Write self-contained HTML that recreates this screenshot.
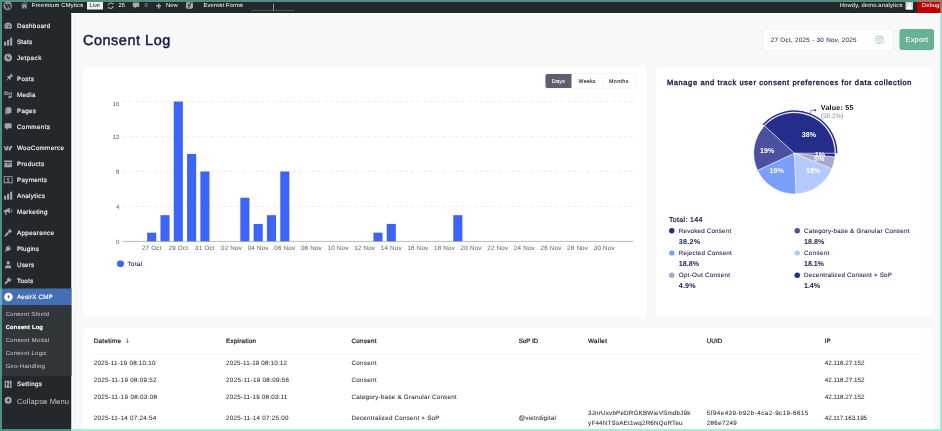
<!DOCTYPE html>
<html lang="en"><head><meta charset="utf-8"><title>Consent Log</title><style>
html,body{margin:0;padding:0}
body{width:942px;height:431px;overflow:hidden;background:#f7f8fa;font-family:"Liberation Sans", Arial, sans-serif;position:relative}
#root{position:absolute;left:0;top:0;width:1884px;height:862px;overflow:hidden;transform:scale(0.5) translateZ(0);transform-origin:0 0;}
.abs,.ic,.card,.t{position:absolute}
.card{background:#fff;border-radius:9px;box-shadow:0 0 0 0.8px #f1f2f5}
.t{white-space:nowrap;line-height:1;text-rendering:geometricPrecision;-webkit-text-stroke:0.32px currentColor}
svg{overflow:visible}
#frame{position:absolute;left:0;top:0;width:1884px;height:862px;box-sizing:border-box;border:4px solid rgba(112,216,192,0.575);pointer-events:none}
</style></head><body><div id="root">
<div class="abs" style="left:0;top:0;width:1884px;height:25.8px;background:#23282c"></div>
<div class="abs" style="left:0;top:0;width:143px;height:862px;background:#23282c"></div>
<div class="abs" style="left:143px;top:25.8px;width:2.8px;height:838px;background:#fdfdfe"></div>
<div class="abs" style="left:143px;top:25.8px;width:1742px;height:2.2px;background:#fdfdfe"></div>
<div class="abs" style="left:0;top:609.8px;width:143px;height:142.4px;background:#31363b"></div>
<div class="abs" style="left:0;top:576.8px;width:143px;height:33px;background:#456fb3"></div>
<svg class="ic" style="left:6.4px;top:1.8px;width:18.8px;height:18.8px" viewBox="0 0 20 20"><circle cx="10" cy="10" r="9.600" fill="#82878b"/><path d="M2.800 6.500h4l2.200 6.500 1.100-3.400-1.100-3.100h4l2.200 6.500 1.300-4.200c.3-1 .2-1.700-.3-2.300h2.300l-3.200 10h-1.600l-2.100-6.200-2.100 6.200h-1.600z" fill="#23282c"/></svg>
<svg class="ic" style="left:40.6px;top:2.8px;width:15.2px;height:15.6px" viewBox="0 0 20 20" fill="#a7aaad"><path d="M10 1.500l9 8.300-1.200 1.300L10 4 2.200 11.100 1 9.800zM10 6l6 5.500V18h-4.200v-4.500H8.200V18H4v-6.500zM14 2.500h2.500v3.300L14 3.600z"/></svg>
<div class="abs" style="left:174.2px;top:3.8px;width:31.4px;height:15.4px;background:#e9f6ec"></div>
<svg class="ic" style="left:213.2px;top:3px;width:16.8px;height:16.8px" viewBox="0 0 20 20" fill="none" stroke="#a7aaad" stroke-width="2.600"><path d="M4 9a6.200 6.200 0 0 1 10.600-3.500M16 11a6.200 6.200 0 0 1-10.600 3.500"/><path d="M12.500 6.800h4.200V2.600zM7.500 13.200H3.300v4.200z" fill="#a7aaad" stroke="none"/></svg>
<svg class="ic" style="left:264px;top:3.4px;width:16px;height:16.4px" viewBox="0 0 20 20" fill="#a7aaad"><path d="M3.500 2.500h13a1.500 1.500 0 0 1 1.500 1.500v8a1.500 1.500 0 0 1-1.500 1.500H11L7 18v-4.500H3.500A1.500 1.500 0 0 1 2 12V4a1.500 1.500 0 0 1 1.500-1.500z"/></svg>
<div class="abs" style="left:312px;top:10.4px;width:10.4px;height:3px;background:#a7aaad"></div><div class="abs" style="left:315.7px;top:6.7px;width:3px;height:10.4px;background:#a7aaad"></div>
<svg class="ic" style="left:370.8px;top:2.4px;width:16.6px;height:18px" viewBox="0 0 20 20"><rect x="1" y="2" width="17" height="16" rx="3.500" fill="#a7aaad"/><path d="M6 6l3 6.500L13.500 1.500" fill="none" stroke="#23282c" stroke-width="2.400"/><path d="M9.300 12.500c-.5 2-1.500 3-3.300 3.200" fill="none" stroke="#23282c" stroke-width="2.200"/></svg>
<div class="abs" style="left:502px;top:19.8px;width:86px;height:1.6px;background:#7d8287"></div><div class="abs" style="left:546.2px;top:6.8px;width:1.6px;height:14px;background:#8b9095"></div>
<div class="abs" style="left:1811px;top:4.4px;width:14.8px;height:14.4px;background:#d5d5d5;overflow:hidden"><div style="position:absolute;left:4.6px;top:2.2px;width:5.6px;height:5.8px;border-radius:50%;background:#fff"></div><div style="position:absolute;left:2px;top:8.6px;width:10.8px;height:8px;border-radius:4px 4px 0 0;background:#fff"></div></div>
<div class="abs" style="left:1834.4px;top:0;width:49.6px;height:25.8px;background:#c00000"></div>
<svg class="ic" style="left:7.1px;top:42.3px;width:18.6px;height:18.6px" viewBox="0 0 20 20" fill="#a2a6a9"><path d="M10 3.2a8.3 8.3 0 0 0-8.3 8.3c0 1.9.6 3.6 1.7 5h13.2a8.2 8.2 0 0 0 1.7-5A8.3 8.3 0 0 0 10 3.2z"/><g fill="#23282c"><circle cx="5" cy="11.6" r="1.1"/><circle cx="6.6" cy="8" r="1.1"/><circle cx="10" cy="6.5" r="1.1"/><circle cx="15" cy="11.6" r="1.1"/><path d="M9 13.5l4.3-6 .9.6-3.3 6.6z"/></g></svg>
<svg class="ic" style="left:7.1px;top:74.3px;width:18.6px;height:18.6px" viewBox="0 0 20 20" fill="#a2a6a9"><rect x="1.200" y="10" width="4.600" height="8.600"/><rect x="7.700" y="6" width="4.600" height="12.600"/><rect x="14.200" y="1.600" width="4.600" height="17"/></svg>
<svg class="ic" style="left:7.1px;top:106.3px;width:18.6px;height:18.6px" viewBox="0 0 20 20" fill="#a2a6a9"><circle cx="10" cy="10" r="8.2"/><path d="M9.4 3.8v7.4H5.6zM10.6 16.2V8.8h3.8z" fill="#23282c"/></svg>
<svg class="ic" style="left:7.1px;top:148.1px;width:18.6px;height:18.6px" viewBox="0 0 20 20" fill="#a2a6a9"><g transform="translate(11.800 8.200) rotate(45)"><path d="M-3.800-9h7.600v1.900h-1.700v4l2.800 3v1.500h-9.800v-1.500l2.800-3v-4h-1.700z"/><path d="M-1 1.200h2l-1 11.500z"/></g></svg>
<svg class="ic" style="left:7.1px;top:180.1px;width:18.6px;height:18.6px" viewBox="0 0 20 20" fill="#a2a6a9"><path d="M2 3h5l1 1.4h3V11H2zM6.5 5.4a2.2 2.2 0 1 0 0 4.4 2.2 2.2 0 0 0 0-4.4z" fill-rule="evenodd"/><path d="M13 6.2l5-1.2v9.6a2 2 0 1 1-1.4-1.9V8l-2.4.6v7a2 2 0 1 1-1.4-1.9z"/></svg>
<svg class="ic" style="left:7.1px;top:212.1px;width:18.6px;height:18.6px" viewBox="0 0 20 20" fill="#a2a6a9"><path d="M6 2.5h8l3 3V15H6z"/><path d="M3.5 5h1.6v11h8.4v1.6h-10z"/></svg>
<svg class="ic" style="left:7.1px;top:244.1px;width:18.6px;height:18.6px" viewBox="0 0 20 20" fill="#a2a6a9"><path d="M3.5 2.5h13a1 1 0 0 1 1 1v9a1 1 0 0 1-1 1H10L6 17.8v-4.3H3.500a1 1 0 0 1-1-1v-9a1 1 0 0 1 1-1z"/></svg>
<svg class="ic" style="left:7.1px;top:286.5px;width:18.6px;height:18.6px" viewBox="0 0 20 20" fill="#a2a6a9"><path d="M0.300 5.200h3.500l.7 6 3-6h3l.7 6 3-6h5.500l-5 9.800h-3.400l-.8-5.500-2.700 5.500H3.400z"/></svg>
<svg class="ic" style="left:7.1px;top:318.1px;width:18.6px;height:18.6px" viewBox="0 0 20 20" fill="#a2a6a9"><path d="M1 3h18v3.400H1zM2 8h16v9.500H2z"/><rect x="6.500" y="10" width="7" height="2" fill="#23282c"/></svg>
<svg class="ic" style="left:7.1px;top:350.3px;width:18.6px;height:18.6px" viewBox="0 0 20 20" fill="#a2a6a9"><path d="M0.500 2.500h19v15h-19zM2.300 4.300v11.400h15.400V4.300z" fill-rule="evenodd"/><path d="M9.300 5.500h1.400v1.100c1.100.1 1.900.7 2.200 1.600l-1.300.5c-.2-.6-.7-.9-1.500-.9s-1.300.3-1.300.9.500.8 1.600 1c1.600.3 2.700.9 2.700 2.300 0 1.200-.9 2-2.400 2.200v1.200H9.300v-1.200c-1.300-.2-2.200-.9-2.500-2l1.300-.4c.2.800.9 1.200 1.900 1.200s1.500-.4 1.500-1-.6-.9-1.800-1.100c-1.500-.3-2.500-.9-2.500-2.200 0-1.100.9-1.900 2.100-2.100z"/></svg>
<svg class="ic" style="left:7.1px;top:381.9px;width:18.6px;height:18.6px" viewBox="0 0 20 20" fill="#a2a6a9"><rect x="1.200" y="10" width="4.600" height="8.600"/><rect x="7.700" y="6" width="4.600" height="12.600"/><rect x="14.200" y="1.600" width="4.600" height="17"/></svg>
<svg class="ic" style="left:7.1px;top:413.7px;width:18.6px;height:18.6px" viewBox="0 0 20 20" fill="#a2a6a9"><path d="M12.800 1.500l2 11.800-8-2.900-1 .3 1.500 6-2.600.8-1.700-6-1.700.5L0.200 7.800l2-.7z"/><path d="M15 3.800a4.400 4.400 0 0 1 4 3.500 4.400 4.400 0 0 1-2.400 4.600l-.5-1.500a2.900 2.900 0 0 0 1.400-2.800 2.900 2.900 0 0 0-2.300-2.300z"/></svg>
<svg class="ic" style="left:7.1px;top:456.3px;width:18.6px;height:18.6px" viewBox="0 0 20 20" fill="#a2a6a9"><path d="M12.500 1.500l6 6-2 2-1.300-.3-2.400 2.400-3.900-3.900 2.400-2.400-.3-1.300zM8.200 8.600l3.500 3.500-6.200 5.800c-1 .9-2.300 1.100-3 .4s-.5-2 .4-3z"/></svg>
<svg class="ic" style="left:7.1px;top:487.9px;width:18.6px;height:18.6px" viewBox="0 0 20 20" fill="#a2a6a9"><path d="M13.100 3.400l1.200 1.200-2.800 2.800 1.800 1.800 2.800-2.800 1.200 1.200-2.800 2.800.9.900-1.600 1.600c-1.700 1.700-4.200 2-6.200.9L4.700 16.700H2.500v-1.200l3.200-3.200c-1.100-2-.8-4.500.9-6.200L8.200 4.500l.9.900z"/></svg>
<svg class="ic" style="left:7.1px;top:519.7px;width:18.6px;height:18.6px" viewBox="0 0 20 20" fill="#a2a6a9"><circle cx="10" cy="6" r="3.700"/><path d="M3 17.500c0-4 2.500-6.300 4.800-6.800l2.200 2.200 2.200-2.200c2.300.5 4.800 2.800 4.800 6.800z"/></svg>
<svg class="ic" style="left:7.1px;top:551.9px;width:18.6px;height:18.6px" viewBox="0 0 20 20" fill="#a2a6a9"><path d="M16.700 6.400l-2.500.6-1.300-1.300.6-2.500c-1.600-.5-3.300-.1-4.500 1.100-1.300 1.300-1.600 3.200-1 4.800L2.600 14.500c-.8.800-.8 2.100 0 2.900s2.100.8 2.900 0L11 11.900c1.600.7 3.500.3 4.800-1 1.200-1.200 1.500-3 .9-4.500z"/></svg>
<svg class="ic" style="left:7.8px;top:584.6px;width:17.8px;height:17.8px" viewBox="0 0 20 20"><circle cx="10" cy="10" r="9.6" fill="#fff"/><path d="M10.800 4l-3 6.200h2.200l-1 5.800 3.500-7.300h-2.300z" fill="#23282c"/></svg>
<svg class="ic" style="left:7.1px;top:758.5px;width:18.6px;height:18.6px" viewBox="0 0 20 20" fill="#a2a6a9"><path d="M2.500 2.500h15v15h-15zM6 4.500v3.600H4.500v2.600H6v4.800h1.600v-4.800H9V8.100H7.600V4.500zm6.400 0v6.600H11v2.600h1.400v1.800H14v-1.800h1.500v-2.600H14V4.500z" fill-rule="evenodd"/></svg>
<svg class="ic" style="left:8.4px;top:791.6px;width:16.8px;height:16.8px" viewBox="0 0 20 20" fill="#a2a6a9"><path d="M10 1.500a8.500 8.500 0 1 0 0 17 8.500 8.500 0 0 0 0-17zM12.500 5.500v9l-6-4.500z" fill-rule="evenodd"/></svg>
<div class="abs" style="left:1527.4px;top:58.6px;width:257.2px;height:42px;background:#fff;border-radius:5px;box-shadow:0 0 3px rgba(0,0,0,0.06)"></div>
<svg class="ic" style="left:1751.2px;top:70.2px;width:16px;height:18px" viewBox="0 0 16 18" fill="none" stroke="#7fc18c" stroke-width="1.250"><rect x="1.200" y="2.800" width="13.600" height="14" rx="3"/><path d="M1.200 7.400h13.600M4.800 0.800v3.400M11.200 0.800v3.400"/><rect x="5.800" y="10" width="4.400" height="4" rx="0.800" stroke-width="1"/></svg>
<div class="abs" style="left:1799.2px;top:58px;width:68.4px;height:42px;background:#68b193;border-radius:5.4px"></div>
<div class="card" style="left:164.6px;top:133.4px;width:1129.4px;height:500.6px"></div>
<div class="card" style="left:1311.2px;top:133.4px;width:555.4px;height:500.6px"></div>
<div class="card" style="left:164.6px;top:655.8px;width:1702px;height:220px"></div>
<div class="abs" style="left:1090.6px;top:148.2px;width:180.2px;height:27.8px;background:#fff;border-radius:3.6px;box-shadow:0 0 0 1px #ebebef"></div>
<div class="abs" style="left:1204.4px;top:148.2px;width:1px;height:27.8px;background:#ececf0"></div>
<div class="abs" style="left:1090.6px;top:148.2px;width:52.8px;height:27.8px;background:#5f5e70;border-radius:3.6px 0 0 3.6px"></div>
<svg class="abs" style="left:0;top:0;width:1884px;height:862px" viewBox="0 0 942 431"><line x1="122.3" x2="633.3" y1="206.44" y2="206.44" stroke="#dcdcdc" stroke-width="0.55" stroke-dasharray="3.13 3.13" stroke-dashoffset="-0.9"/><line x1="122.3" x2="633.3" y1="171.48" y2="171.48" stroke="#dcdcdc" stroke-width="0.55" stroke-dasharray="3.13 3.13" stroke-dashoffset="-0.9"/><line x1="122.3" x2="633.3" y1="136.52" y2="136.52" stroke="#dcdcdc" stroke-width="0.55" stroke-dasharray="3.13 3.13" stroke-dashoffset="-0.9"/><line x1="122.3" x2="633.3" y1="101.56" y2="101.56" stroke="#dcdcdc" stroke-width="0.55" stroke-dasharray="3.13 3.13" stroke-dashoffset="-0.9"/><rect x="147.15" y="232.66" width="9.1" height="8.74" fill="#3d64f9"/><rect x="160.46" y="215.18" width="9.1" height="26.22" fill="#3d64f9"/><rect x="173.77" y="101.56" width="9.1" height="139.84" fill="#3d64f9"/><rect x="187.08" y="154.00" width="9.1" height="87.40" fill="#3d64f9"/><rect x="200.39" y="171.48" width="9.1" height="69.92" fill="#3d64f9"/><rect x="240.32" y="197.70" width="9.1" height="43.70" fill="#3d64f9"/><rect x="253.63" y="223.92" width="9.1" height="17.48" fill="#3d64f9"/><rect x="266.94" y="215.18" width="9.1" height="26.22" fill="#3d64f9"/><rect x="280.25" y="171.48" width="9.1" height="69.92" fill="#3d64f9"/><rect x="373.42" y="232.66" width="9.1" height="8.74" fill="#3d64f9"/><rect x="386.73" y="223.92" width="9.1" height="17.48" fill="#3d64f9"/><rect x="453.28" y="215.18" width="9.1" height="26.22" fill="#3d64f9"/><line x1="122.3" x2="633.3" y1="241.4" y2="241.4" stroke="#8b8b8b" stroke-width="0.6"/></svg>
<div class="abs" style="left:234px;top:520.6px;width:13.6px;height:13.6px;border-radius:50%;background:#3d64f9"></div>
<svg class="abs" style="left:0;top:0;width:1884px;height:862px" viewBox="0 0 942 431"><path d="M794.4 153.3L835.00 153.30A40.6 40.6 0 0 0 764.47 125.87Z" fill="#252e8a" stroke="#fff" stroke-width="0.45" stroke-linejoin="round"/><path d="M794.4 153.3L764.47 125.87A40.6 40.6 0 0 0 757.60 170.46Z" fill="#4b50a0" stroke="#fff" stroke-width="0.45" stroke-linejoin="round"/><path d="M794.4 153.3L757.60 170.46A40.6 40.6 0 0 0 796.17 193.86Z" fill="#7a9ffa" stroke="#fff" stroke-width="0.45" stroke-linejoin="round"/><path d="M794.4 153.3L796.17 193.86A40.6 40.6 0 0 0 831.91 168.84Z" fill="#b4c9fe" stroke="#fff" stroke-width="0.45" stroke-linejoin="round"/><path d="M794.4 153.3L831.91 168.84A40.6 40.6 0 0 0 834.85 156.84Z" fill="#a7a9d0" stroke="#fff" stroke-width="0.45" stroke-linejoin="round"/><path d="M794.4 153.3L834.85 156.84A40.6 40.6 0 0 0 835.00 153.30Z" fill="#252e8a" stroke="#fff" stroke-width="0.45" stroke-linejoin="round"/><path d="M837.45 153.30A43.05 43.05 0 0 0 762.66 124.22L763.80 125.26A41.5 41.5 0 0 1 835.90 153.30Z" fill="#252e8a"/><path d="M809.98 113.22L811.14 110.24L815.0 110.24" fill="none" stroke="#252e8a" stroke-width="0.55"/><circle cx="815.2" cy="110.24" r="0.95" fill="#252e8a"/></svg>
<div class="abs" style="left:1338.2px;top:456.4px;width:10.8px;height:10.8px;border-radius:50%;background:#252e8a"></div>
<div class="abs" style="left:1589.2px;top:456.4px;width:10.8px;height:10.8px;border-radius:50%;background:#4b50a0"></div>
<div class="abs" style="left:1338.2px;top:500.6px;width:10.8px;height:10.8px;border-radius:50%;background:#7a9ffa"></div>
<div class="abs" style="left:1589.2px;top:500.6px;width:10.8px;height:10.8px;border-radius:50%;background:#b4c9fe"></div>
<div class="abs" style="left:1338.2px;top:544.8px;width:10.8px;height:10.8px;border-radius:50%;background:#a7a9d0"></div>
<div class="abs" style="left:1589.2px;top:544.8px;width:10.8px;height:10.8px;border-radius:50%;background:#252e8a"></div>
<svg class="abs" style="left:250.6px;top:676px;width:7.2px;height:10.8px" viewBox="0 0 8 12" fill="none" stroke="#66667c" stroke-width="1.900"><path d="M4 1v9.500M1 7.500l3 3 3-3"/></svg>
<div class="abs" style="left:187.4px;top:708.6px;width:1656.6px;height:1.2px;background:#ededf0"></div>
<div class="t" id="t0" style="top:3.7px;font-size:11.62px;color:#f0f0f1;left:63.4px;letter-spacing:0.402px;-webkit-text-stroke:0.08px currentColor;">Freemium CMytics</div>
<div class="t" id="t1" style="top:3.7px;font-size:11.62px;color:#1d2327;left:179.2px;letter-spacing:0.032px;-webkit-text-stroke:0.08px currentColor;">Live</div>
<div class="t" id="t2" style="top:3.7px;font-size:11.62px;color:#f0f0f1;left:237px;letter-spacing:0.284px;-webkit-text-stroke:0.08px currentColor;">25</div>
<div class="t" id="t3" style="top:3.7px;font-size:11.62px;color:#a7aaad;left:289.2px;letter-spacing:0.128px;-webkit-text-stroke:0.08px currentColor;">0</div>
<div class="t" id="t4" style="top:3.7px;font-size:11.62px;color:#f0f0f1;left:332.2px;letter-spacing:0.086px;-webkit-text-stroke:0.08px currentColor;">New</div>
<div class="t" id="t5" style="top:3.7px;font-size:11.62px;color:#f0f0f1;left:407.2px;letter-spacing:0.242px;-webkit-text-stroke:0.08px currentColor;">Everest Forms</div>
<div class="t" id="t6" style="top:3.7px;font-size:11.62px;color:#f0f0f1;left:1679.4px;letter-spacing:0.334px;-webkit-text-stroke:0.08px currentColor;">Howdy, demo.analytics</div>
<div class="t" id="t7" style="top:3.7px;font-size:11.62px;color:#fff;left:1843.6px;letter-spacing:0.296px;-webkit-text-stroke:0.08px currentColor;">Debug</div>
<div class="t" id="t8" style="top:45.74px;font-size:12.52px;color:#f0f0f1;left:33.8px;letter-spacing:0.67px;">Dashboard</div>
<div class="t" id="t9" style="top:77.74px;font-size:12.52px;color:#f0f0f1;left:33.8px;letter-spacing:0.516px;">Stats</div>
<div class="t" id="t10" style="top:109.74px;font-size:12.52px;color:#f0f0f1;left:33.8px;letter-spacing:0.944px;">Jetpack</div>
<div class="t" id="t11" style="top:151.74px;font-size:12.52px;color:#f0f0f1;left:33.8px;letter-spacing:0.724px;">Posts</div>
<div class="t" id="t12" style="top:183.74px;font-size:12.52px;color:#f0f0f1;left:33.8px;letter-spacing:0.776px;">Media</div>
<div class="t" id="t13" style="top:215.74px;font-size:12.52px;color:#f0f0f1;left:33.8px;letter-spacing:0.626px;">Pages</div>
<div class="t" id="t14" style="top:247.74px;font-size:12.52px;color:#f0f0f1;left:33.8px;letter-spacing:0.812px;">Comments</div>
<div class="t" id="t15" style="top:289.74px;font-size:12.52px;color:#f0f0f1;left:33.8px;letter-spacing:0.728px;">WooCommerce</div>
<div class="t" id="t16" style="top:321.74px;font-size:12.52px;color:#f0f0f1;left:33.8px;letter-spacing:0.714px;">Products</div>
<div class="t" id="t17" style="top:353.74px;font-size:12.52px;color:#f0f0f1;left:33.8px;letter-spacing:0.648px;">Payments</div>
<div class="t" id="t18" style="top:385.74px;font-size:12.52px;color:#f0f0f1;left:33.8px;letter-spacing:0.714px;">Analytics</div>
<div class="t" id="t19" style="top:417.74px;font-size:12.52px;color:#f0f0f1;left:33.8px;letter-spacing:0.754px;">Marketing</div>
<div class="t" id="t20" style="top:459.74px;font-size:12.52px;color:#f0f0f1;left:33.8px;letter-spacing:0.744px;">Appearance</div>
<div class="t" id="t21" style="top:491.74px;font-size:12.52px;color:#f0f0f1;left:33.8px;letter-spacing:0.49px;">Plugins</div>
<div class="t" id="t22" style="top:523.74px;font-size:12.52px;color:#f0f0f1;left:33.8px;letter-spacing:0.428px;">Users</div>
<div class="t" id="t23" style="top:555.74px;font-size:12.52px;color:#f0f0f1;left:33.8px;letter-spacing:0.796px;">Tools</div>
<div class="t" id="t24" style="top:587.74px;font-size:12.52px;color:#fff;left:33.8px;letter-spacing:0.404px;">AesirX CMP</div>
<div class="t" id="t25" style="top:621.7px;font-size:11.62px;color:#c3c4c7;left:11.5px;letter-spacing:0.596px;-webkit-text-stroke:0.1px currentColor;">Consent Shield</div>
<div class="t" id="t26" style="top:647.7px;font-size:11.62px;color:#fff;font-weight:700;left:11.5px;letter-spacing:0.336px;">Consent Log</div>
<div class="t" id="t27" style="top:673.7px;font-size:11.62px;color:#c3c4c7;left:11.5px;letter-spacing:0.702px;-webkit-text-stroke:0.1px currentColor;">Consent Modal</div>
<div class="t" id="t28" style="top:699.7px;font-size:11.62px;color:#c3c4c7;left:11.5px;letter-spacing:0.64px;-webkit-text-stroke:0.1px currentColor;">Consent Logic</div>
<div class="t" id="t29" style="top:725.7px;font-size:11.62px;color:#c3c4c7;left:11.5px;letter-spacing:0.642px;-webkit-text-stroke:0.1px currentColor;">Geo-Handling</div>
<div class="t" id="t30" style="top:761.74px;font-size:12.52px;color:#f0f0f1;left:33.8px;letter-spacing:0.71px;">Settings</div>
<div class="t" id="t31" style="top:794.9px;font-size:15.2px;color:#bdbfc2;left:33.8px;letter-spacing:0.242px;-webkit-text-stroke:0.08px currentColor;">Collapse Menu</div>
<div class="t" id="t32" style="top:65.5px;font-size:29px;color:#17163f;font-weight:500;left:165.8px;letter-spacing:1.034px;-webkit-text-stroke:0.84px #17163f;">Consent Log</div>
<div class="t" id="t33" style="top:73.74px;font-size:12.52px;color:#2b2a52;left:1541.4px;letter-spacing:0.596px;-webkit-text-stroke:0.12px currentColor;">27 Oct, 2025 - 30 Nov, 2025</div>
<div class="t" id="t34" style="top:71.84px;font-size:14.3px;color:#fff;font-weight:500;left:1811px;letter-spacing:0.734px;-webkit-text-stroke:0.2px #fff;">Export</div>
<div class="t" id="t35" style="top:156.64px;font-size:10.72px;color:#fff;font-weight:500;left:1103.6px;letter-spacing:0.592px;-webkit-text-stroke:0.2px currentColor;">Days</div>
<div class="t" id="t36" style="top:156.64px;font-size:10.72px;color:#1e1e2a;font-weight:500;left:1157px;letter-spacing:0.358px;-webkit-text-stroke:0.2px currentColor;">Weeks</div>
<div class="t" id="t37" style="top:156.64px;font-size:10.72px;color:#1e1e2a;font-weight:500;left:1218px;letter-spacing:0.728px;-webkit-text-stroke:0.2px currentColor;">Months</div>
<div class="t" id="t38" style="top:477.9px;font-size:12.2px;color:#6a6a72;right:1645.2px;-webkit-text-stroke:0.1px currentColor;">0</div>
<div class="t" id="t39" style="top:407.9px;font-size:12.2px;color:#6a6a72;right:1645.2px;-webkit-text-stroke:0.1px currentColor;">4</div>
<div class="t" id="t40" style="top:337.9px;font-size:12.2px;color:#6a6a72;right:1645.2px;-webkit-text-stroke:0.1px currentColor;">8</div>
<div class="t" id="t41" style="top:267.9px;font-size:12.2px;color:#6a6a72;right:1645.2px;-webkit-text-stroke:0.1px currentColor;">12</div>
<div class="t" id="t42" style="top:201.9px;font-size:12.2px;color:#6a6a72;right:1645.2px;-webkit-text-stroke:0.1px currentColor;">16</div>
<div class="t" id="t43" style="top:489.74px;font-size:12.52px;color:#6a6a72;left:303.4px;transform:translateX(-50%);-webkit-text-stroke:0.1px currentColor;letter-spacing:0.4px;">27 Oct</div>
<div class="t" id="t44" style="top:489.74px;font-size:12.52px;color:#6a6a72;left:356.64px;transform:translateX(-50%);-webkit-text-stroke:0.1px currentColor;letter-spacing:0.4px;">29 Oct</div>
<div class="t" id="t45" style="top:489.74px;font-size:12.52px;color:#6a6a72;left:409.88px;transform:translateX(-50%);-webkit-text-stroke:0.1px currentColor;letter-spacing:0.4px;">31 Oct</div>
<div class="t" id="t46" style="top:489.74px;font-size:12.52px;color:#6a6a72;left:463.12px;transform:translateX(-50%);-webkit-text-stroke:0.1px currentColor;letter-spacing:0.4px;">02 Nov</div>
<div class="t" id="t47" style="top:489.74px;font-size:12.52px;color:#6a6a72;left:516.36px;transform:translateX(-50%);-webkit-text-stroke:0.1px currentColor;letter-spacing:0.4px;">04 Nov</div>
<div class="t" id="t48" style="top:489.74px;font-size:12.52px;color:#6a6a72;left:569.6px;transform:translateX(-50%);-webkit-text-stroke:0.1px currentColor;letter-spacing:0.4px;">06 Nov</div>
<div class="t" id="t49" style="top:489.74px;font-size:12.52px;color:#6a6a72;left:622.84px;transform:translateX(-50%);-webkit-text-stroke:0.1px currentColor;letter-spacing:0.4px;">08 Nov</div>
<div class="t" id="t50" style="top:489.74px;font-size:12.52px;color:#6a6a72;left:676.08px;transform:translateX(-50%);-webkit-text-stroke:0.1px currentColor;letter-spacing:0.4px;">10 Nov</div>
<div class="t" id="t51" style="top:489.74px;font-size:12.52px;color:#6a6a72;left:729.32px;transform:translateX(-50%);-webkit-text-stroke:0.1px currentColor;letter-spacing:0.4px;">12 Nov</div>
<div class="t" id="t52" style="top:489.74px;font-size:12.52px;color:#6a6a72;left:782.56px;transform:translateX(-50%);-webkit-text-stroke:0.1px currentColor;letter-spacing:0.4px;">14 Nov</div>
<div class="t" id="t53" style="top:489.74px;font-size:12.52px;color:#6a6a72;left:835.8px;transform:translateX(-50%);-webkit-text-stroke:0.1px currentColor;letter-spacing:0.4px;">16 Nov</div>
<div class="t" id="t54" style="top:489.74px;font-size:12.52px;color:#6a6a72;left:889.04px;transform:translateX(-50%);-webkit-text-stroke:0.1px currentColor;letter-spacing:0.4px;">18 Nov</div>
<div class="t" id="t55" style="top:489.74px;font-size:12.52px;color:#6a6a72;left:942.28px;transform:translateX(-50%);-webkit-text-stroke:0.1px currentColor;letter-spacing:0.4px;">20 Nov</div>
<div class="t" id="t56" style="top:489.74px;font-size:12.52px;color:#6a6a72;left:995.52px;transform:translateX(-50%);-webkit-text-stroke:0.1px currentColor;letter-spacing:0.4px;">22 Nov</div>
<div class="t" id="t57" style="top:489.74px;font-size:12.52px;color:#6a6a72;left:1048.76px;transform:translateX(-50%);-webkit-text-stroke:0.1px currentColor;letter-spacing:0.4px;">24 Nov</div>
<div class="t" id="t58" style="top:489.74px;font-size:12.52px;color:#6a6a72;left:1102px;transform:translateX(-50%);-webkit-text-stroke:0.1px currentColor;letter-spacing:0.4px;">26 Nov</div>
<div class="t" id="t59" style="top:489.74px;font-size:12.52px;color:#6a6a72;left:1155.24px;transform:translateX(-50%);-webkit-text-stroke:0.1px currentColor;letter-spacing:0.4px;">28 Nov</div>
<div class="t" id="t60" style="top:489.74px;font-size:12.52px;color:#6a6a72;left:1208.48px;transform:translateX(-50%);-webkit-text-stroke:0.1px currentColor;letter-spacing:0.4px;">30 Nov</div>
<div class="t" id="t61" style="top:521.74px;font-size:12.52px;color:#1c1b4d;left:255.2px;letter-spacing:0.74px;-webkit-text-stroke:0.2px currentColor;">Total</div>
<div class="t" id="t62" style="top:157px;font-size:15px;color:#1c1b4d;left:1333.8px;letter-spacing:1.23px;-webkit-text-stroke:0.76px #1c1b4d;">Manage and track user consent preferences for data collection</div>
<div class="t" id="t63" style="top:261.86px;font-size:14.3px;color:#fff;font-weight:700;left:1603.52px;-webkit-text-stroke:0;">38%</div>
<div class="t" id="t64" style="top:293.86px;font-size:14.3px;color:#fff;font-weight:700;right:335.32px;-webkit-text-stroke:0;">19%</div>
<div class="t" id="t65" style="top:333.86px;font-size:14.3px;color:#fff;font-weight:700;right:316.26px;-webkit-text-stroke:0;">19%</div>
<div class="t" id="t66" style="top:333.86px;font-size:14.3px;color:#fff;font-weight:700;left:1612.08px;-webkit-text-stroke:0;">18%</div>
<div class="t" id="t67" style="top:309.86px;font-size:14.3px;color:#fff;font-weight:700;left:1628.24px;-webkit-text-stroke:0;">5%</div>
<div class="t" id="t68" style="top:301.86px;font-size:14.3px;color:#fff;font-weight:700;left:1629.36px;-webkit-text-stroke:0;">1%</div>
<div class="t" id="t69" style="top:207.84px;font-size:14.3px;color:#111;font-weight:700;left:1641.6px;letter-spacing:0.426px;-webkit-text-stroke:0;">Value: 55</div>
<div class="t" id="t70" style="top:224.9px;font-size:13.2px;color:#999;left:1641.6px;letter-spacing:-0.132px;-webkit-text-stroke:0.1px currentColor;">(38.2%)</div>
<div class="t" id="t71" style="top:431.86px;font-size:14.3px;color:#1c1b4d;left:1338px;letter-spacing:0.556px;-webkit-text-stroke:0.44px currentColor;">Total: 144</div>
<div class="t" id="t72" style="top:455.74px;font-size:12.52px;color:#1c1b4d;left:1357.6px;letter-spacing:0.378px;-webkit-text-stroke:0.16px currentColor;">Revoked Consent</div>
<div class="t" id="t73" style="top:475.86px;font-size:14.3px;color:#1c1b4d;font-weight:700;left:1357.6px;letter-spacing:0.514px;-webkit-text-stroke:0;">38.2%</div>
<div class="t" id="t74" style="top:455.74px;font-size:12.52px;color:#1c1b4d;left:1608px;letter-spacing:0.472px;-webkit-text-stroke:0.16px currentColor;">Category-base &amp; Granular Consent</div>
<div class="t" id="t75" style="top:475.86px;font-size:14.3px;color:#1c1b4d;font-weight:700;left:1608px;letter-spacing:0.064px;-webkit-text-stroke:0;">18.8%</div>
<div class="t" id="t76" style="top:499.74px;font-size:12.52px;color:#1c1b4d;left:1357.6px;letter-spacing:0.434px;-webkit-text-stroke:0.16px currentColor;">Rejected Consent</div>
<div class="t" id="t77" style="top:519.86px;font-size:14.3px;color:#1c1b4d;font-weight:700;left:1357.6px;letter-spacing:0.064px;-webkit-text-stroke:0;">18.8%</div>
<div class="t" id="t78" style="top:499.74px;font-size:12.52px;color:#1c1b4d;left:1608px;letter-spacing:0.664px;-webkit-text-stroke:0.16px currentColor;">Consent</div>
<div class="t" id="t79" style="top:519.86px;font-size:14.3px;color:#1c1b4d;font-weight:700;left:1608px;letter-spacing:-0.186px;-webkit-text-stroke:0;">18.1%</div>
<div class="t" id="t80" style="top:543.74px;font-size:12.52px;color:#1c1b4d;left:1357.6px;letter-spacing:0.556px;-webkit-text-stroke:0.16px currentColor;">Opt-Out Consent</div>
<div class="t" id="t81" style="top:563.86px;font-size:14.3px;color:#1c1b4d;font-weight:700;left:1357.6px;letter-spacing:0.27px;-webkit-text-stroke:0;">4.9%</div>
<div class="t" id="t82" style="top:543.74px;font-size:12.52px;color:#1c1b4d;left:1608px;letter-spacing:0.44px;-webkit-text-stroke:0.16px currentColor;">Decentralized Consent + SoP</div>
<div class="t" id="t83" style="top:563.86px;font-size:14.3px;color:#1c1b4d;font-weight:700;left:1608px;letter-spacing:-0.132px;-webkit-text-stroke:0;">1.4%</div>
<div class="t" id="t84" style="top:675.74px;font-size:12.52px;color:#1f1f2e;left:187.4px;letter-spacing:0.646px;-webkit-text-stroke:0.48px currentColor;">Datetime</div>
<div class="t" id="t85" style="top:675.74px;font-size:12.52px;color:#1f1f2e;left:452.2px;letter-spacing:0.482px;-webkit-text-stroke:0.48px currentColor;">Expiration</div>
<div class="t" id="t86" style="top:675.74px;font-size:12.52px;color:#1f1f2e;left:703px;letter-spacing:0.596px;-webkit-text-stroke:0.48px currentColor;">Consent</div>
<div class="t" id="t87" style="top:675.74px;font-size:12.52px;color:#1f1f2e;left:1037.4px;letter-spacing:-0.126px;-webkit-text-stroke:0.48px currentColor;">SoP ID</div>
<div class="t" id="t88" style="top:675.74px;font-size:12.52px;color:#1f1f2e;left:1176.2px;letter-spacing:0.658px;-webkit-text-stroke:0.48px currentColor;">Wallet</div>
<div class="t" id="t89" style="top:675.74px;font-size:12.52px;color:#1f1f2e;left:1413.6px;letter-spacing:0.068px;-webkit-text-stroke:0.48px currentColor;">UUID</div>
<div class="t" id="t90" style="top:675.74px;font-size:12.52px;color:#1f1f2e;left:1649.6px;letter-spacing:-0.226px;-webkit-text-stroke:0.48px currentColor;">IP</div>
<div class="t" id="t91" style="top:719.74px;font-size:12.52px;color:#2c2c36;left:187.4px;letter-spacing:0.45px;-webkit-text-stroke:0.12px currentColor;">2025-11-19 08:10:10</div>
<div class="t" id="t92" style="top:719.74px;font-size:12.52px;color:#2c2c36;left:452.2px;letter-spacing:0.362px;-webkit-text-stroke:0.12px currentColor;">2025-11-19 08:10:12</div>
<div class="t" id="t93" style="top:719.74px;font-size:12.52px;color:#2c2c36;left:703px;letter-spacing:0.596px;-webkit-text-stroke:0.12px currentColor;">Consent</div>
<div class="t" id="t94" style="top:719.74px;font-size:12.52px;color:#2c2c36;left:1649.6px;letter-spacing:0.008px;-webkit-text-stroke:0.12px currentColor;">42.118.27.152</div>
<div class="t" id="t95" style="top:753.74px;font-size:12.52px;color:#2c2c36;left:187.4px;letter-spacing:0.584px;-webkit-text-stroke:0.12px currentColor;">2025-11-19 08:09:52</div>
<div class="t" id="t96" style="top:753.74px;font-size:12.52px;color:#2c2c36;left:452.2px;letter-spacing:0.584px;-webkit-text-stroke:0.12px currentColor;">2025-11-19 08:09:56</div>
<div class="t" id="t97" style="top:753.74px;font-size:12.52px;color:#2c2c36;left:703px;letter-spacing:0.596px;-webkit-text-stroke:0.12px currentColor;">Consent</div>
<div class="t" id="t98" style="top:753.74px;font-size:12.52px;color:#2c2c36;left:1649.6px;letter-spacing:0.008px;-webkit-text-stroke:0.12px currentColor;">42.118.27.152</div>
<div class="t" id="t99" style="top:787.74px;font-size:12.52px;color:#2c2c36;left:187.4px;letter-spacing:0.618px;-webkit-text-stroke:0.12px currentColor;">2025-11-19 08:03:08</div>
<div class="t" id="t100" style="top:787.74px;font-size:12.52px;color:#2c2c36;left:452.2px;letter-spacing:0.446px;-webkit-text-stroke:0.12px currentColor;">2025-11-19 08:03:11</div>
<div class="t" id="t101" style="top:787.74px;font-size:12.52px;color:#2c2c36;left:703px;letter-spacing:0.452px;-webkit-text-stroke:0.12px currentColor;">Category-base &amp; Granular Consent</div>
<div class="t" id="t102" style="top:787.74px;font-size:12.52px;color:#2c2c36;left:1649.6px;letter-spacing:0.008px;-webkit-text-stroke:0.12px currentColor;">42.118.27.152</div>
<div class="t" id="t103" style="top:829.74px;font-size:12.52px;color:#2c2c36;left:187.4px;letter-spacing:0.55px;-webkit-text-stroke:0.12px currentColor;">2025-11-14 07:24:54</div>
<div class="t" id="t104" style="top:829.74px;font-size:12.52px;color:#2c2c36;left:452.2px;letter-spacing:0.516px;-webkit-text-stroke:0.12px currentColor;">2025-11-14 07:25:00</div>
<div class="t" id="t105" style="top:829.74px;font-size:12.52px;color:#2c2c36;left:703px;letter-spacing:0.434px;-webkit-text-stroke:0.12px currentColor;">Decentralized Consent + SoP</div>
<div class="t" id="t106" style="top:829.74px;font-size:12.52px;color:#2c2c36;left:1649.6px;letter-spacing:-0.114px;-webkit-text-stroke:0.12px currentColor;">42.117.163.195</div>
<div class="t" id="t107" style="top:829.74px;font-size:12.52px;color:#2c2c36;left:1037.4px;letter-spacing:0.446px;-webkit-text-stroke:0.12px currentColor;">@vietrdigital</div>
<div class="t" id="t108" style="top:819.74px;font-size:12.52px;color:#2c2c36;left:1176.2px;letter-spacing:0.386px;-webkit-text-stroke:0.12px currentColor;">3JnrUxvbPeDRGKBWieVSmdbJ9k</div>
<div class="t" id="t109" style="top:839.74px;font-size:12.52px;color:#2c2c36;left:1176.2px;letter-spacing:0.394px;-webkit-text-stroke:0.12px currentColor;">yF44NTSsAEt1wq2R6NQoRTeu</div>
<div class="t" id="t110" style="top:819.74px;font-size:12.52px;color:#2c2c36;left:1413.6px;letter-spacing:0.894px;-webkit-text-stroke:0.12px currentColor;">5f94e439-b92b-4ca2-9c19-6615</div>
<div class="t" id="t111" style="top:839.74px;font-size:12.52px;color:#2c2c36;left:1413.6px;letter-spacing:0.614px;-webkit-text-stroke:0.12px currentColor;">286e7249</div>
<div id="frame"></div></div></body></html>
